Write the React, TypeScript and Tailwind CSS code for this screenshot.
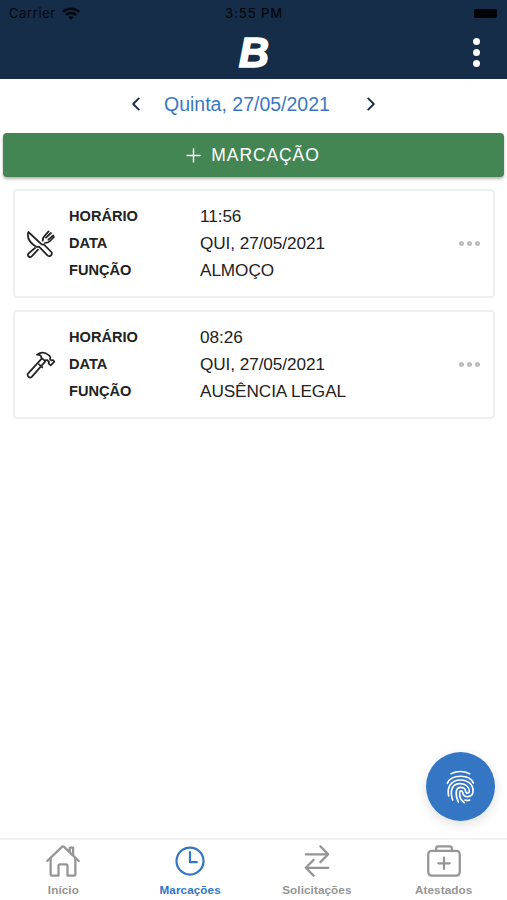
import React from "react";
import {
  IoAddOutline,
  IoChevronBack,
  IoChevronForward,
  IoHomeOutline,
  IoMedkitOutline,
  IoSwapHorizontalOutline,
  IoTimeOutline,
} from "react-icons/io5";

function Wifi() {
  return (
    <svg className="h-[14px] w-[18px]" viewBox="0 0 18 14" fill="none" stroke="#05080d" strokeWidth="2.5">
      <path d="M.9 4.9C5.4.6 12.6.6 17.1 4.9" />
      <path d="M3.9 8c2.9-2.7 7.3-2.7 10.2 0" />
      <path d="M6.2 10.1c1.5-1.3 4.1-1.3 5.6 0L9 13z" fill="#05080d" stroke="none" />
    </svg>
  );
}

function Cutlery() {
  return (
    <svg className="h-[30px] w-[30px]" viewBox="0 0 90 90" fill="none" stroke="#222" strokeWidth="5.2" strokeLinecap="round" strokeLinejoin="round">
      <path d="M7 9C2 27 13 43 32 54l7-1 26 27c7 5 16-4 11-11L54 47l-7-1Z" />
      <path d="M27 57 7 74c-4 6 4 14 10 8l19-20" />
      <path d="M50 35c0-7 2-11 7-16L68 7M60 26 75 12M67 32 82 19M56 42c7 0 12-2 16-6l12-12" />
    </svg>
  );
}

function Hammer() {
  return (
    <svg className="h-[30px] w-[30px]" viewBox="0 0 90 90" fill="none" stroke="#222" strokeWidth="5.2" strokeLinecap="round" strokeLinejoin="round">
      <path d="M33 14c11-8 25-7 36 2l4 5-1 7 4 3 5-1 4 5-11 11-6-5 1-6-6-5-8 1-9-8c0-6-5-9-13-9Z" />
      <path d="M47 26 6 71c-4 7 5 16 12 9l40-46M39 43l10 9" />
    </svg>
  );
}

function Fingerprint() {
  return (
    <svg className="h-[34px] w-[29px]" viewBox="108 88 87 102" fill="none" stroke="currentColor" strokeWidth="5" strokeLinecap="round">
      <path d="M123 99c17-8 39-8 56 0" />
      <path d="M112 128c11-27 66-29 78-1" />
      <path d="M116 166c-6-27 8-48 36-48 22 0 38 14 37 33 0 9-6 16-15 17-9 1-15-4-16-13-1-6-8-6-9 0-1 12 4 24 14 31" />
      <path d="M128 178c-9-28-3-49 23-49 17 0 27 11 27 23 0 7-10 8-11 0-1-8-7-12-15-12-16 0-17 22-7 44" />
      <path d="M165 178c6 2 10 2 14 0" />
    </svg>
  );
}

type Entry = { time: string; date: string; role: string; icon: React.ReactNode };

const entries: Entry[] = [
  { time: "11:56", date: "QUI, 27/05/2021", role: "ALMOÇO", icon: <Cutlery /> },
  { time: "08:26", date: "QUI, 27/05/2021", role: "AUSÊNCIA LEGAL", icon: <Hammer /> },
];

function EntryCard({ entry }: { entry: Entry }) {
  return (
    <article className="flex h-[109px] items-center rounded-[4px] border-2 border-[#eeeff0] pr-[13px] pl-[11px]">
      {entry.icon}
      <dl className="ml-[13px] grid flex-1 grid-cols-[131px_1fr] leading-[27px] text-[#222]">
        <dt className="text-[14.6px] font-bold">HORÁRIO</dt>
        <dd className="text-[17.2px] tracking-[-0.08px]">{entry.time}</dd>
        <dt className="text-[14.6px] font-bold">DATA</dt>
        <dd className="text-[17.2px] tracking-[-0.08px]">{entry.date}</dd>
        <dt className="text-[14.6px] font-bold">FUNÇÃO</dt>
        <dd className="text-[17.2px] tracking-[-0.08px]">{entry.role}</dd>
      </dl>
      <div className="flex gap-[3px]">
        <i className="size-[5px] rounded-full bg-[#bdbdbd]" />
        <i className="size-[5px] rounded-full bg-[#bdbdbd]" />
        <i className="size-[5px] rounded-full bg-[#bdbdbd]" />
      </div>
    </article>
  );
}

const tabs = [
  { label: "Início", Icon: IoHomeOutline, active: false },
  { label: "Marcações", Icon: IoTimeOutline, active: true },
  { label: "Solicitações", Icon: IoSwapHorizontalOutline, active: false },
  { label: "Atestados", Icon: IoMedkitOutline, active: false },
];

export default function App() {
  return (
    <div className="relative flex h-[900px] w-[507px] flex-col overflow-hidden bg-white font-['Liberation_Sans',Arial,sans-serif]">
      <header className="h-[79px] bg-[#152d48]">
        <div className="grid h-[27px] grid-cols-3 items-center pr-[10px] pl-[9px] font-[Inter,sans-serif] text-[13px] text-[#05080d]">
          <span className="flex items-center gap-[6px] tracking-[0.6px]">Carrier <Wifi /></span>
          <span className="pl-[2px] text-center font-medium tracking-[0.9px]">3:55 PM</span>
          <span className="h-[9px] w-[23px] justify-self-end rounded-[2px] bg-[#020305]" />
        </div>
        <div className="grid h-[52px] grid-cols-3 items-center pr-[27px] pl-[28px]">
          <span className="col-start-2 text-center text-[42px] leading-[50px] font-bold text-white italic [-webkit-text-stroke:1.5px_white]">B</span>
          <div className="flex flex-col gap-[4px] justify-self-end pb-[2px]">
            <i className="size-[7px] rounded-full bg-white" />
            <i className="size-[7px] rounded-full bg-white" />
            <i className="size-[7px] rounded-full bg-white" />
          </div>
        </div>
      </header>
      <div className="flex h-[54px] items-center justify-center pb-[4px]">
        <IoChevronBack className="size-[20px] text-[#152d48]" />
        <span className="mr-[18px] ml-[18px] w-[166px] pt-px text-[19.5px] whitespace-nowrap text-[#3a78c3]">Quinta, 27/05/2021</span>
        <span className="w-[13px]" />
        <IoChevronForward className="size-[20px] text-[#152d48]" />
      </div>
      <button className="mx-[3px] flex h-[44px] shrink-0 items-center justify-center rounded-[4px] bg-[#438553] pr-[5px] text-[17.5px] tracking-[0.9px] text-white shadow-[0_2px_3px_rgba(0,0,0,0.3)]">
        <IoAddOutline className="mr-[6px] size-[23px]" />
        MARCAÇÃO
      </button>
      <main className="flex flex-1 flex-col gap-[12px] pr-[12px] pl-[13px] pt-[12px]">
        {entries.map((entry) => (
          <EntryCard key={entry.time} entry={entry} />
        ))}
      </main>
      <button className="absolute top-[752px] left-[426px] flex size-[69px] items-center justify-center rounded-full bg-[#3475c4] text-white shadow-[0_4px_12px_rgba(0,0,0,0.12)]">
        <Fingerprint />
      </button>
      <nav className="grid h-[62px] grid-cols-4 border-t-2 border-[#f3f3f3]">
        {tabs.map(({ label, Icon, active }) => (
          <a key={label} className={active ? "flex flex-col items-center pt-[3px] text-[#3475c4]" : "flex flex-col items-center pt-[3px] text-[#959595]"}>
            <Icon className="size-[36px]" />
            <span className="mt-[3px] text-[11.7px] leading-[16px] font-bold tracking-[0.1px]">{label}</span>
          </a>
        ))}
      </nav>
    </div>
  );
}
